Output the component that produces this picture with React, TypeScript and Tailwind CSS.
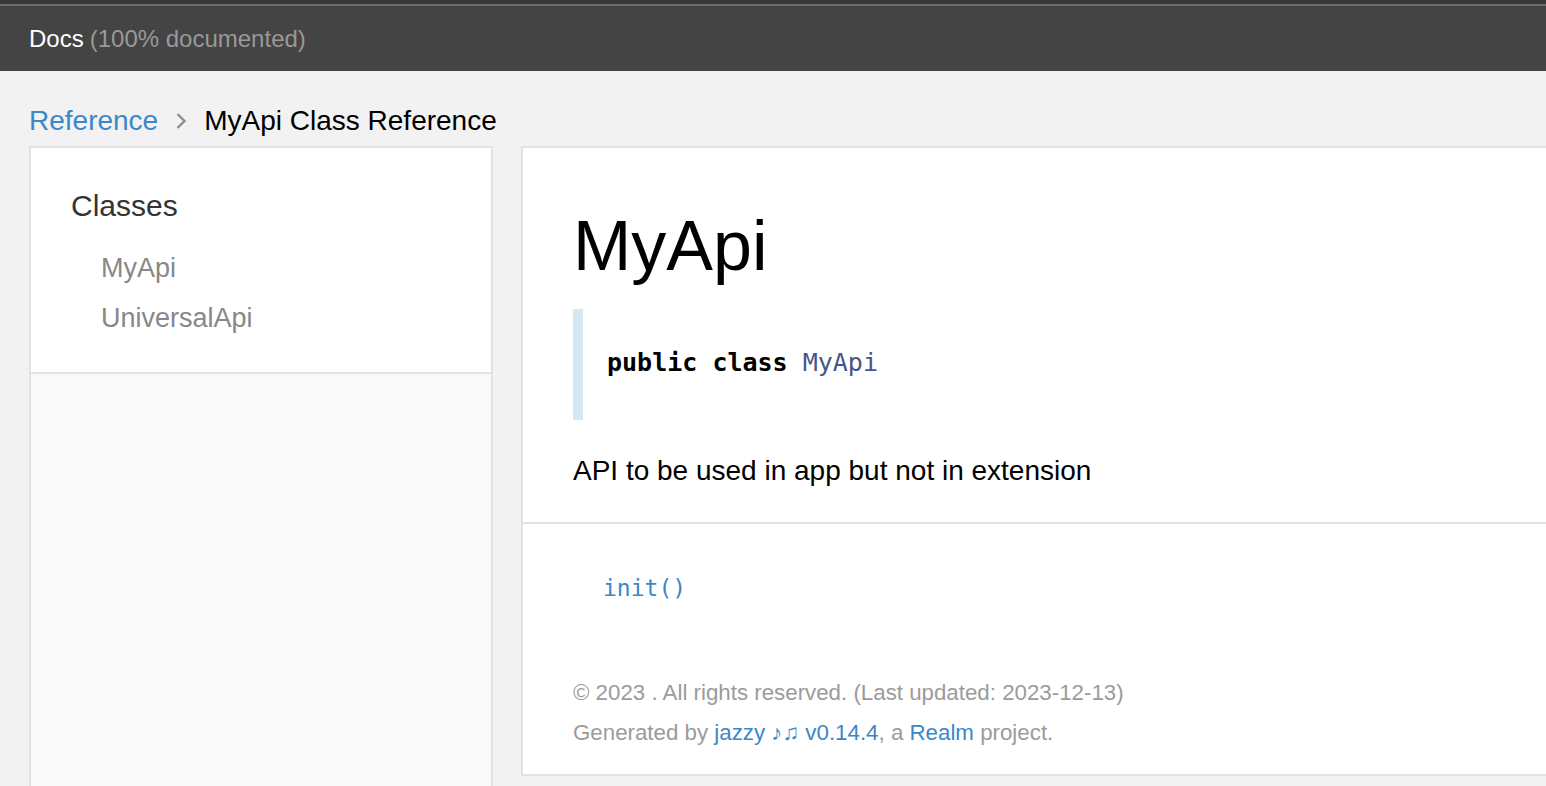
import React from 'react'

const sans = "font-['Liberation_Sans','Helvetica_Neue',Arial,sans-serif]"
const mono = "font-['DejaVu_Sans_Mono',Menlo,monospace]"

const classes = ['MyApi', 'UniversalApi']

export default function App() {
  return (
    <div className={`h-[786px] overflow-hidden bg-[#f2f2f2] ${sans}`}>
      {/* top bar */}
      <div className="h-[4px] bg-[#343a3e]" />
      <div className="h-[2px] bg-[#6b6b6b]" />
      <header className="flex h-[65px] items-center bg-[#444444] pl-[29px] text-[24px] leading-[30px]">
        <span className="text-white">Docs</span>
        <span className="ml-[6px] text-[#999999]">(100% documented)</span>
      </header>

      {/* breadcrumb */}
      <div className="flex items-center pl-[29px] pt-[33px] pb-[8px] text-[28px] leading-[34px]">
        <a className="text-[#3b87c9]">Reference</a>
        <svg width="12" height="18" viewBox="0 0 12 18" className="ml-[17px]">
          <path d="M2.5 2 L9.5 9 L2.5 16" fill="none" stroke="#8e8e8e" strokeWidth="2.4" />
        </svg>
        <span className="ml-[17px] text-black">MyApi Class Reference</span>
      </div>

      <div className="flex items-start pl-[29px]">
        {/* sidebar */}
        <aside className="flex h-[700px] w-[464px] shrink-0 flex-col border-2 border-[#e2e2e2] bg-[#f9f9f9]">
          <div className="border-b-2 border-[#e2e2e2] bg-white pl-[40px] pt-[40px] pb-[29px]">
            <p className="text-[30px] leading-[36px] text-[#333333]">Classes</p>
            <ul className="mt-[19px] pl-[30px]">
              {classes.map((name) => (
                <li key={name} className="text-[27px] leading-[50px] text-[#888888]">
                  {name}
                </li>
              ))}
            </ul>
          </div>
        </aside>

        {/* main content */}
        <main className="ml-[28px] min-w-0 flex-1 border-2 border-r-0 border-[#e2e2e2] bg-white">
          <section className="border-b-2 border-[#e2e2e2] pl-[50px] pt-[58px] pb-[34px]">
            <h1 className="text-[70px] leading-[80px] text-black">MyApi</h1>
            <div className="mt-[23px] border-l-[10px] border-[#d5e7f3] pl-[24px] pt-[39px] pb-[42px]">
              <code className={`${mono} text-[25px] leading-[30px] text-black`}>
                <span className="font-bold">public</span> <span className="font-bold">class</span>{' '}
                <span className="text-[#445588]">MyApi</span>
              </code>
            </div>
            <p className="mt-[34px] text-[28px] leading-[34px] text-black">
              API to be used in app but not in extension
            </p>
          </section>

          <section className="pl-[80px] pt-[50px]">
            <a className={`${mono} block text-[23px] leading-[28px] text-[#3b87c9]`}>init()</a>
          </section>

          <footer className="pl-[50px] pt-[71px] pb-[21px] text-[22.3px] leading-[40px] text-[#9b9b9b]">
            <p>© 2023 . All rights reserved. (Last updated: 2023-12-13)</p>
            <p>
              Generated by <a className="text-[#3b87c9]">jazzy ♪♫ v0.14.4</a>, a{' '}
              <a className="text-[#3b87c9]">Realm</a> project.
            </p>
          </footer>
        </main>
      </div>
    </div>
  )
}
